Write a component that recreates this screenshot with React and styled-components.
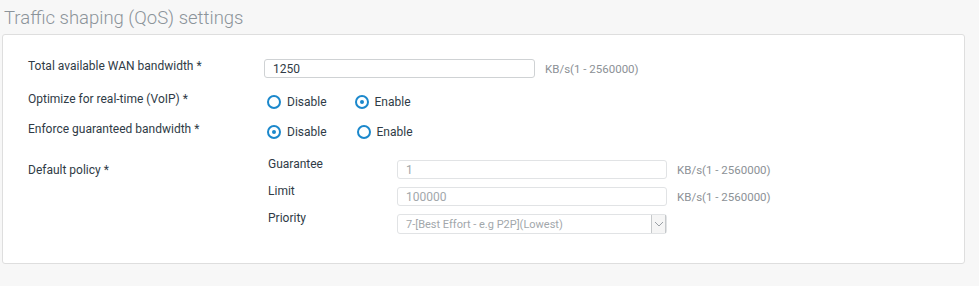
import React from "react";
import styled, { createGlobalStyle } from "styled-components";

const Global = createGlobalStyle`
  body {
    margin: 0;
    background: #f7f7f7;
    font-family: Roboto, "Liberation Sans", sans-serif;
  }
`;

function Radio({ checked, label, gap }) {
  return (
    <RadioItem $gap={gap}>
      <Circle $checked={checked} />
      {label}
    </RadioItem>
  );
}

function App() {
  return (
    <Page>
      <Global />
      <Title>Traffic shaping (QoS) settings</Title>
      <Panel>
        <Row $height={19}>
          <Label>Total available WAN bandwidth *</Label>
          <Controls>
            <Input $width={271} defaultValue="1250" />
            <Hint>KB/s(1 - 2560000)</Hint>
          </Controls>
        </Row>
        <Row $height={20} $top={14}>
          <Label>Optimize for real-time (VoIP) *</Label>
          <Controls>
            <Radio label="Disable" gap={25} />
            <Radio label="Enable" checked />
          </Controls>
        </Row>
        <Row $height={20} $top={10}>
          <Label>Enforce guaranteed bandwidth *</Label>
          <Controls>
            <Radio label="Disable" checked gap={27} />
            <Radio label="Enable" />
          </Controls>
        </Row>
        <Row $top={15}>
          <Label $pad={6}>Default policy *</Label>
          <SubGrid>
            <SubLabel>Guarantee</SubLabel>
            <SubControls>
              <Input $width={270} value="1" disabled readOnly />
              <Hint>KB/s(1 - 2560000)</Hint>
            </SubControls>
            <SubLabel>Limit</SubLabel>
            <SubControls>
              <Input $width={270} value="100000" disabled readOnly />
              <Hint>KB/s(1 - 2560000)</Hint>
            </SubControls>
            <SubLabel>Priority</SubLabel>
            <SubControls>
              <Select>
                <span>7-[Best Effort - e.g P2P](Lowest)</span>
                <Arrow>
                  <svg width="10" height="6" viewBox="0 0 10 6">
                    <path d="M1 1l4 4 4-4" fill="none" stroke="#9aa0a5" strokeWidth="1" />
                  </svg>
                </Arrow>
              </Select>
            </SubControls>
          </SubGrid>
        </Row>
      </Panel>
    </Page>
  );
}

export default App;

const Page = styled.div`
  width: 979px;
  height: 286px;
  padding: 0 15px 0 2px;
  box-sizing: border-box;
`;

const Title = styled.h2`
  margin: 0;
  padding: 8px 0 0 2px;
  height: 34px;
  box-sizing: border-box;
  font-size: 18.5px;
  font-weight: 300;
  line-height: 20px;
  color: #8c949a;
`;

const Panel = styled.div`
  background: #fff;
  border: 1px solid #dedede;
  border-radius: 3px;
  width: 963px;
  height: 230px;
  box-sizing: border-box;
  padding: 24px 0 0 25px;
`;

const Row = styled.div`
  display: grid;
  grid-template-columns: 236px auto;
  align-items: start;
  margin-top: ${(p) => p.$top || 0}px;
  height: ${(p) => (p.$height ? p.$height + "px" : "auto")};
`;

const Label = styled.div`
  font-size: 12px;
  line-height: 14px;
  color: #2f3b46;
  padding-top: ${(p) => p.$pad || 0}px;
`;

const Controls = styled.div`
  display: flex;
  align-items: center;
  height: 100%;
`;

const Input = styled.input`
  width: ${(p) => p.$width}px;
  height: 19px;
  box-sizing: border-box;
  border: 1px solid #cfd2d4;
  border-radius: 3px;
  padding: 0 8px;
  font-family: inherit;
  font-size: 12px;
  color: #2f3b46;
  background: #fff;
  outline: none;

  &:disabled {
    color: #a2a7ab;
    border-color: #e1e3e5;
    background: #fff;
  }
`;

const Hint = styled.span`
  margin-left: 10px;
  font-size: 11.5px;
  color: #8c9196;
`;

const RadioItem = styled.label`
  display: flex;
  align-items: center;
  font-size: 12px;
  color: #2f3b46;
  margin-left: 3px;
  margin-right: ${(p) => p.$gap || 0}px;
`;

const Circle = styled.span`
  width: 14px;
  height: 14px;
  box-sizing: border-box;
  border: 2px solid #1b88cc;
  border-radius: 50%;
  margin-right: 6px;
  display: flex;
  align-items: center;
  justify-content: center;

  &::after {
    content: "";
    width: 4px;
    height: 4px;
    border-radius: 50%;
    background: ${(p) => (p.$checked ? "#1b88cc" : "transparent")};
  }
`;

const SubGrid = styled.div`
  display: grid;
  grid-template-columns: 133px auto;
  row-gap: 5px;
  align-items: start;
`;

const SubLabel = styled.div`
  font-size: 12px;
  line-height: 14px;
  color: #2f3b46;
  padding-left: 4px;
`;

const SubControls = styled.div`
  display: flex;
  align-items: center;
  margin-top: 3px;
`;

const Select = styled.div`
  width: 270px;
  height: 20px;
  box-sizing: border-box;
  border: 1px solid #e1e3e5;
  border-radius: 3px;
  display: flex;
  align-items: center;
  justify-content: space-between;
  padding-left: 8px;
  font-size: 11px;
  color: #a2a7ab;
`;

const Arrow = styled.div`
  width: 15px;
  height: 18px;
  box-sizing: border-box;
  border-left: 1px solid #c6c9cb;
  border-right: 1px solid #c6c9cb;
  background: #f5f5f5;
  display: flex;
  align-items: center;
  justify-content: center;
`;
